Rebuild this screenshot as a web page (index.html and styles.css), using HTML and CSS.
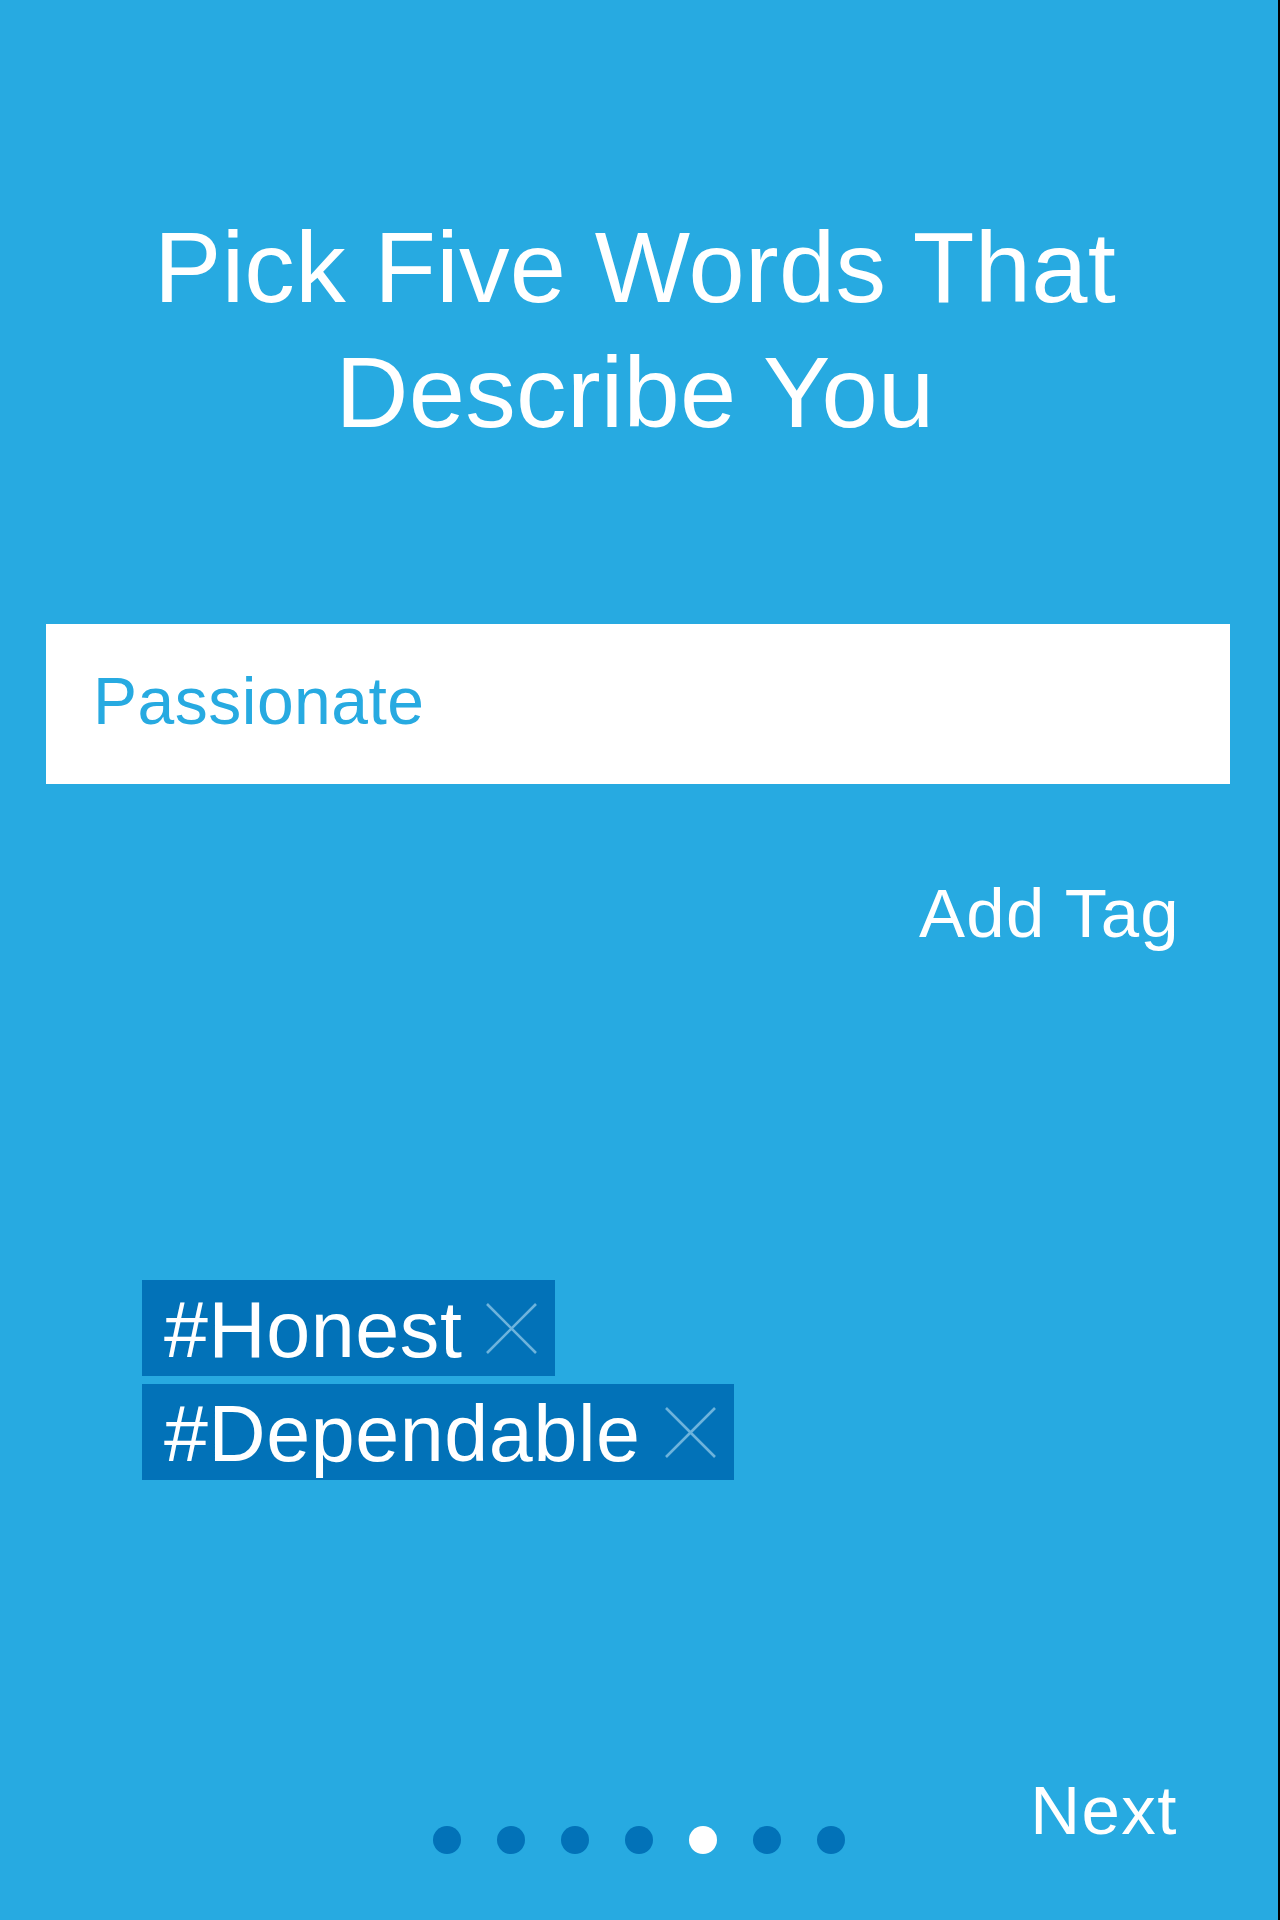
FILE: index.html
```html
<!DOCTYPE html>
<html lang="en">
<head>
<meta charset="utf-8">
<title>Pick Five Words</title>
<link rel="stylesheet" href="styles.css">
</head>
<body>
<div class="screen">
  <h1 class="title">Pick Five Words That<br>Describe You</h1>
  <div class="field"><span class="placeholder">Passionate</span></div>
  <div class="add-row"><span class="add-tag">Add Tag</span></div>
  <div class="tags">
    <div class="tag"><span class="tag-text">#Honest</span><svg class="tag-x" width="51" height="51" viewBox="0 0 51 51"><path d="M1 1 L50 50 M50 1 L1 50" stroke="#6db3dc" stroke-width="2.6" fill="none"/></svg></div>
    <div class="tag"><span class="tag-text">#Dependable</span><svg class="tag-x" width="51" height="51" viewBox="0 0 51 51"><path d="M1 1 L50 50 M50 1 L1 50" stroke="#6db3dc" stroke-width="2.6" fill="none"/></svg></div>
  </div>
  <div class="footer">
    <div class="spacer"></div>
    <div class="dots">
      <span class="dot"></span><span class="dot"></span><span class="dot"></span><span class="dot"></span><span class="dot active"></span><span class="dot"></span><span class="dot"></span>
    </div>
    <div class="next-wrap"><span class="next">Next</span></div>
  </div>
</div>
</body>
</html>
```
FILE: styles.css
```css
html, body {
  margin: 0;
  padding: 0;
  background: #000;
}
body {
  width: 1280px;
  height: 1920px;
  overflow: hidden;
  font-family: "Liberation Sans", Arial, sans-serif;
}
.screen {
  width: 1278px;
  height: 1920px;
  background: #27aae1;
  padding-top: 205px;
  box-sizing: border-box;
  color: #fff;
}
.title {
  margin: 0;
  padding-right: 8px;
  font-size: 101px;
  line-height: 125px;
  font-weight: 400;
  text-align: center;
  letter-spacing: 0.3px;
}
.field {
  margin: 169px 0 0 46px;
  width: 1184px;
  height: 160px;
  background: #fff;
  box-sizing: border-box;
  padding: 44px 0 0 47px;
}
.placeholder {
  display: block;
  font-size: 66px;
  line-height: 66px;
  color: #27aae1;
  letter-spacing: 0.5px;
}
.add-row {
  margin-top: 95px;
  display: flex;
  justify-content: flex-end;
  padding-right: 98px;
}
.add-tag {
  font-size: 69px;
  line-height: 69px;
  letter-spacing: 1.3px;
}
.tags {
  margin: 332px 0 0 142px;
  display: flex;
  flex-direction: column;
  align-items: flex-start;
  gap: 8px;
}
.tag {
  height: 96px;
  box-sizing: border-box;
  background: #0272b8;
  display: flex;
  align-items: center;
  padding: 0 18px 0 22px;
}
.tag-text {
  font-size: 79px;
  line-height: 79px;
  padding-top: 2px;
  letter-spacing: 0.6px;
}
.tag-x {
  display: block;
  margin-left: 24px;
}
.footer {
  margin-top: 296px;
  display: grid;
  grid-template-columns: 1fr auto 1fr;
  align-items: start;
}
.dots {
  display: flex;
  gap: 36px;
  margin-top: 50px;
}
.dot {
  width: 28px;
  height: 28px;
  border-radius: 50%;
  background: #0272b8;
}
.dot.active {
  background: #fff;
}
.next-wrap {
  display: flex;
  justify-content: flex-end;
  padding-right: 100px;
}
.next {
  font-size: 69px;
  line-height: 69px;
  letter-spacing: 1.5px;
}
```
